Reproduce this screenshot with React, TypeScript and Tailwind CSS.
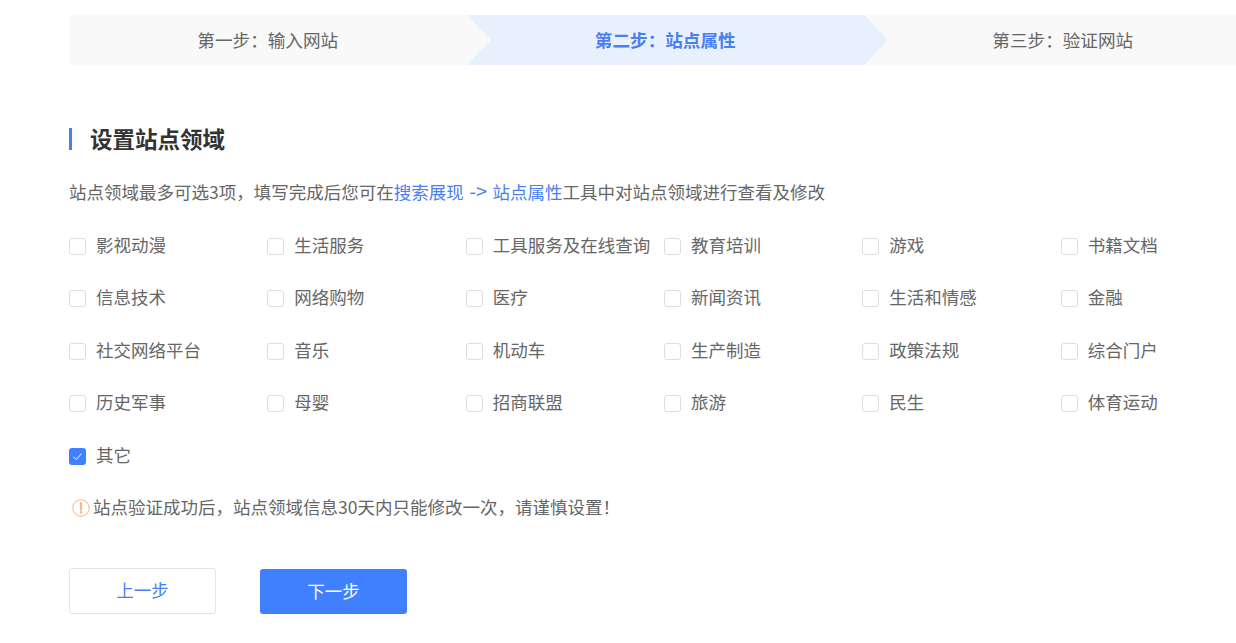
import React from 'react';

const rows = [
  ['影视动漫', '生活服务', '工具服务及在线查询', '教育培训', '游戏', '书籍文档'],
  ['信息技术', '网络购物', '医疗', '新闻资讯', '生活和情感', '金融'],
  ['社交网络平台', '音乐', '机动车', '生产制造', '政策法规', '综合门户'],
  ['历史军事', '母婴', '招商联盟', '旅游', '民生', '体育运动'],
  ['其它'],
];

const Step: React.FC<{ label: string; active?: boolean; first?: boolean; last?: boolean }> = ({ label, active, first, last }) => (
  <div
    className={`relative flex h-[50px] w-[397.5px] shrink-0 items-center justify-center text-[17.6px] ${
      active ? 'bg-[#e9f0fd] font-bold text-[#4a7ff0]' : 'bg-[#f9f9f9] text-[#666666]'
    } ${first ? 'z-20' : active ? 'z-10' : ''}`}
  >
    {label}
    {!last && (
      <span
        className={`absolute left-full top-0 h-0 w-0 border-y-[25px] border-l-[24px] border-y-transparent ${
          active ? 'border-l-[#e9f0fd]' : 'border-l-[#f9f9f9]'
        }`}
      />
    )}
  </div>
);

const Option: React.FC<{ label: string; checked?: boolean }> = ({ label, checked }) => (
  <label className="flex h-[52.5px] items-center text-[17.5px] text-[#666666]">
    {checked ? (
      <span className="mr-[10px] flex h-[17px] w-[17px] shrink-0 items-center justify-center rounded-[3px] bg-[#4080ff]">
        <svg width="11" height="11" viewBox="0 0 11 11" fill="none" stroke="#ffffff" strokeWidth="1">
          <path d="M1.5 5.8 4.3 8.6 9.5 2.6" />
        </svg>
      </span>
    ) : (
      <span className="mr-[10px] h-[17px] w-[17px] shrink-0 rounded-[3px] border border-[#dddddd] bg-white" />
    )}
    <span className="whitespace-nowrap pb-[3px]">{label}</span>
  </label>
);

export default function App() {
  return (
    <div className="h-[643px] overflow-hidden bg-white pl-[69px] pt-[15px] font-['Noto_Sans_CJK_SC','Liberation_Sans',sans-serif]">
      <div className="flex w-[1300px]">
        <Step label="第一步：输入网站" first />
        <Step label="第二步：站点属性" active />
        <Step label="第三步：验证网站" last />
      </div>

      <div className="mt-[63px] flex h-[22px] items-center border-l-[3px] border-[#4a7ff0] pl-[18px] text-[22.5px] font-bold text-[#333333]">
        设置站点领域
      </div>

      <p className="mt-[29px] h-[26px] text-[17.5px] leading-[26px] text-[#666666]">
        站点领域最多可选3项，填写完成后您可在
        <span className="text-[#4a7ff0]">
          搜索展现 <span className="mx-[1.5px] text-[20px] leading-none">-&gt;</span> 站点属性
        </span>
        工具中对站点领域进行查看及修改
      </p>

      <div className="mt-[15px] grid w-[1190px] grid-cols-6">
        {rows.flat().map((label) => (
          <Option key={label} label={label} checked={label === '其它'} />
        ))}
      </div>

      <div className="mt-[12px] flex h-[26px] items-center text-[17.5px] text-[#666666]">
        <svg className="ml-[3px] mr-[3px] shrink-0" width="18" height="18" viewBox="0 0 18 18" fill="none">
          <circle cx="9" cy="9" r="8.2" stroke="#f8cdb0" strokeWidth="1.5" />
          <path d="M9 4.2v6.2" stroke="#f8b98c" strokeWidth="2.4" strokeLinecap="round" />
          <circle cx="9" cy="13.4" r="1.3" fill="#f8b98c" />
        </svg>
        站点验证成功后，站点领域信息30天内只能修改一次，请谨慎设置！
      </div>

      <div className="mt-[47px] flex items-start gap-[44px] text-[17.5px]">
        <button className="h-[46px] w-[147px] rounded-[3px] border border-[#e5e5e5] bg-white text-[#4a7ff0]">上一步</button>
        <button className="mt-px h-[45px] w-[147px] rounded-[3px] bg-[#4080ff] text-white">下一步</button>
      </div>
    </div>
  );
}
